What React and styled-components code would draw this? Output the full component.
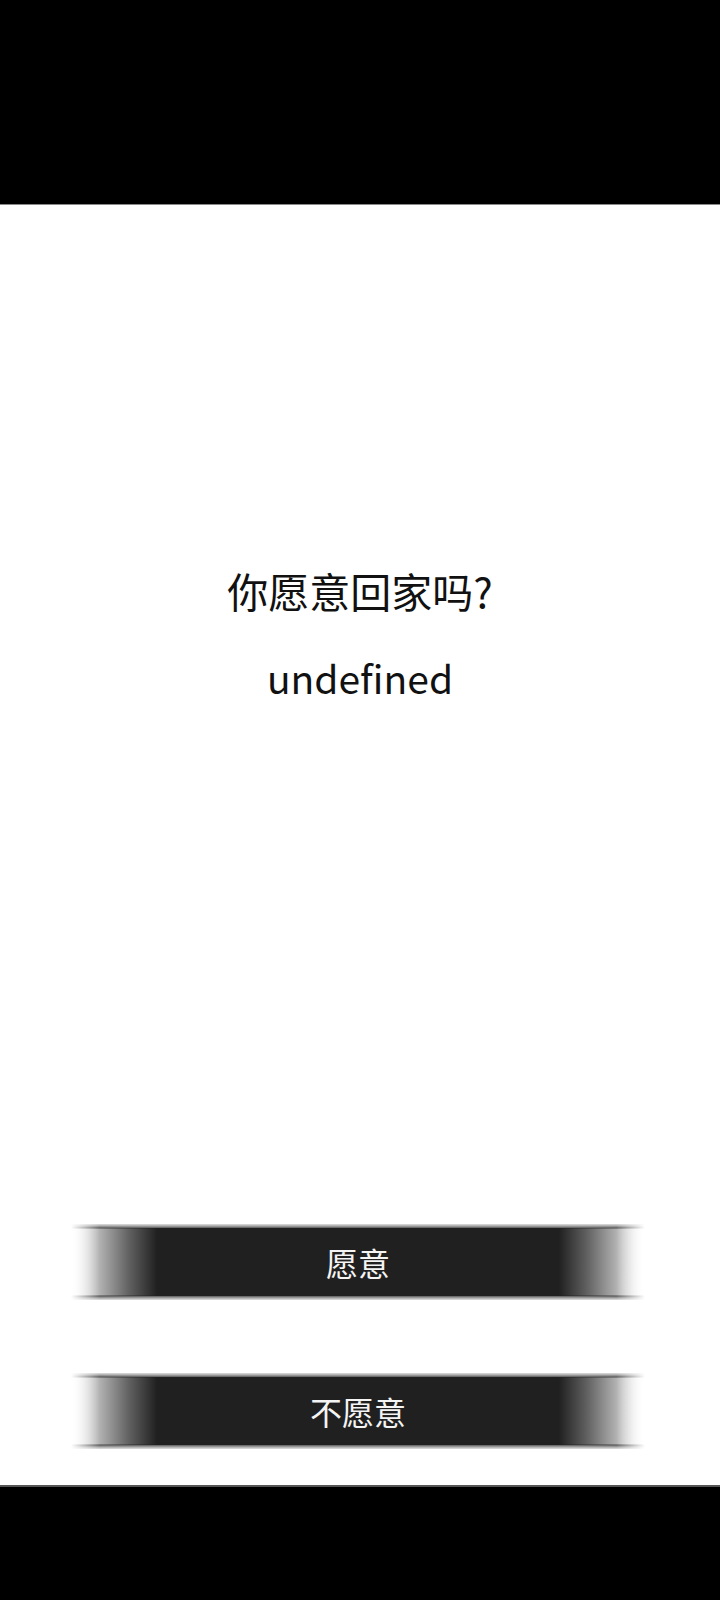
import React from "react";
import styled, { createGlobalStyle } from "styled-components";

const Global = createGlobalStyle`
  html, body { margin: 0; padding: 0; background: #fff; }
  body { font-family: "Noto Sans CJK SC", "Noto Sans", sans-serif; }
  * { box-sizing: border-box; }
`;

const Screen = styled.div`
  width: 720px;
  height: 1600px;
  display: flex;
  flex-direction: column;
  background: #fff;
`;

const TopBar = styled.div`
  height: 205px;
  flex: none;
  background: #000;
  border-bottom: 1px solid #8a8a8a;
`;

const BottomBar = styled.div`
  height: 115px;
  flex: none;
  background: #000;
  border-top: 2px solid #555;
`;

const Main = styled.main`
  flex: 1;
  display: flex;
  flex-direction: column;
  align-items: center;
  padding: 357px 0 36px;
`;

const Question = styled.h1`
  margin: 0;
  font-size: 41px;
  line-height: 56px;
  font-weight: 400;
  color: #111;
  text-align: center;
`;

const Answer = styled.p`
  margin: 32px 0 0;
  font-size: 39px;
  line-height: 54px;
  font-weight: 400;
  color: #111;
  text-align: center;
`;

const Spacer = styled.div`
  flex: 1;
`;

const Buttons = styled.div`
  width: 100%;
  display: flex;
  flex-direction: column;
  align-items: center;
  gap: 73px;
`;

const FadeButton = styled.button`
  width: 574px;
  height: 76px;
  border: none;
  padding: 0;
  margin-left: -4px;
  cursor: pointer;
  font-family: inherit;
  font-size: 32px;
  font-weight: 400;
  color: #f4f4f4;
  display: flex;
  align-items: center;
  justify-content: center;
  background-color: transparent;
  background-repeat: no-repeat;
  background-image:
    linear-gradient(to right, #fff 0%, rgba(255,255,255,0.6) 2%, rgba(255,255,255,0) 5%, rgba(255,255,255,0) 95%, rgba(255,255,255,0.6) 98%, #fff 100%),
    linear-gradient(to right, rgba(32,32,32,0) 0%, rgba(32,32,32,0.35) 5%, rgba(32,32,32,0.7) 10%, #202020 15%, #202020 85%, rgba(32,32,32,0.7) 90%, rgba(32,32,32,0.35) 95%, rgba(32,32,32,0) 100%),
    linear-gradient(to bottom, #e0e0e0 0px, #a8a8a8 2px, #5a5a5a 4px, rgba(255,255,255,0) 5px, rgba(255,255,255,0) calc(100% - 5px), #5a5a5a calc(100% - 4px), #a8a8a8 calc(100% - 2px), #e0e0e0 100%);
  background-size: 100% 100%, 100% calc(100% - 8px), 100% 100%;
  background-position: center, center, center;
`;

export default function App() {
  return (
    <>
      <Global />
      <Screen>
        <TopBar />
        <Main>
          <Question>你愿意回家吗?</Question>
          <Answer>undefined</Answer>
          <Spacer />
          <Buttons>
            <FadeButton>愿意</FadeButton>
            <FadeButton>不愿意</FadeButton>
          </Buttons>
        </Main>
        <BottomBar />
      </Screen>
    </>
  );
}
